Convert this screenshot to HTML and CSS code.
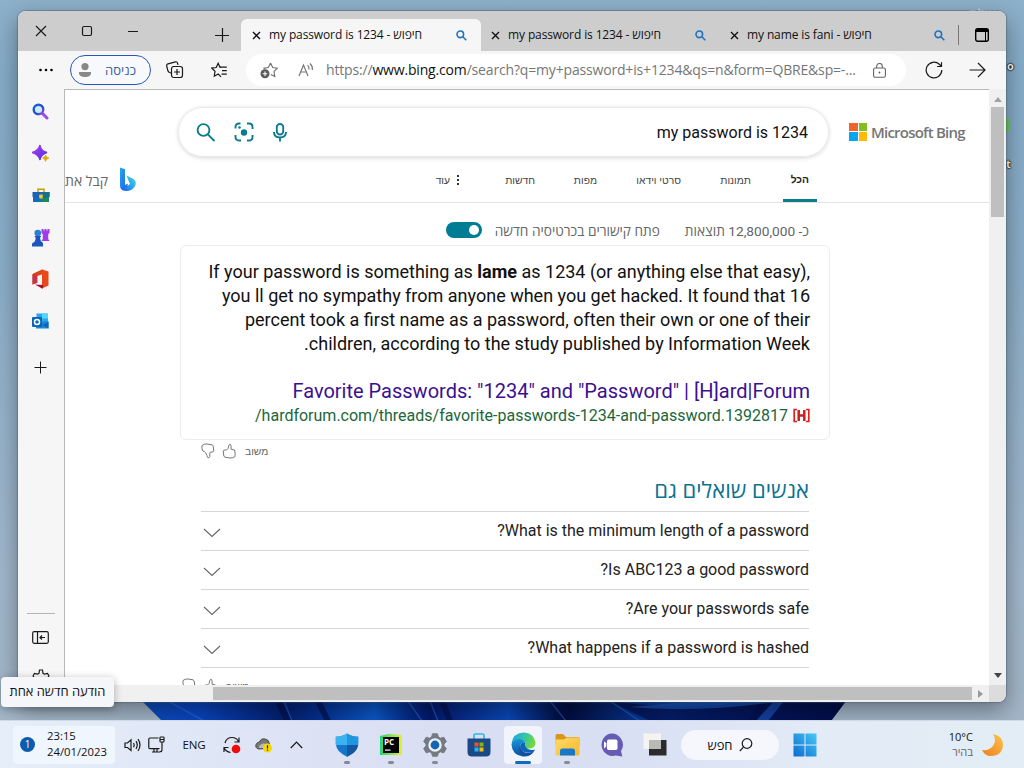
FILE: index.html
```html
<!DOCTYPE html>
<html lang="he">
<head>
<meta charset="utf-8">
<title>my password is 1234 - חיפוש</title>
<link rel="stylesheet" href="styles.css">
</head>
<body>
<svg class="defs" width="0" height="0">
  <defs>
    <linearGradient id="gMag" x1="0" y1="0" x2="1" y2="1"><stop offset="0" stop-color="#1b63d6"/><stop offset=".6" stop-color="#1c4fc4"/><stop offset="1" stop-color="#b14bf0"/></linearGradient>
    <linearGradient id="gStar" x1="0" y1="0" x2="1" y2="1"><stop offset="0" stop-color="#b23af2"/><stop offset="1" stop-color="#4a35e0"/></linearGradient>
    <linearGradient id="gBing" x1="0" y1="0" x2="1" y2="1"><stop offset="0" stop-color="#25a5f5"/><stop offset="1" stop-color="#1b5fe0"/></linearGradient>
    <linearGradient id="gBing2" x1="1" y1="0" x2="0" y2="1"><stop offset="0" stop-color="#40e0d8"/><stop offset=".5" stop-color="#2ba4ef"/><stop offset="1" stop-color="#1c53e8"/></linearGradient>
    <linearGradient id="gOff" x1="0" y1="0" x2="1" y2="1"><stop offset="0" stop-color="#d22a10"/><stop offset="1" stop-color="#f2662a"/></linearGradient>
    <linearGradient id="gEdge" x1="0" y1="0" x2="1" y2=".3"><stop offset="0" stop-color="#1aa5e6"/><stop offset=".6" stop-color="#35c5a5"/><stop offset="1" stop-color="#6fd843"/></linearGradient>
    <linearGradient id="gEdge2" x1="0" y1="0" x2="0" y2="1"><stop offset="0" stop-color="#1a93dc"/><stop offset="1" stop-color="#0c4fa0"/></linearGradient>
    <linearGradient id="gFold" x1="0" y1="0" x2="1" y2="1"><stop offset="0" stop-color="#ffdc6a"/><stop offset="1" stop-color="#f5b82a"/></linearGradient>
    <linearGradient id="gWin" x1="1" y1="0" x2="0" y2="1"><stop offset="0" stop-color="#48c8f6"/><stop offset="1" stop-color="#0a6ad0"/></linearGradient>
    <linearGradient id="gMoon" x1="1" y1="0" x2="0" y2="1"><stop offset="0" stop-color="#fcc54a"/><stop offset="1" stop-color="#ee7d1e"/></linearGradient>
    <linearGradient id="gWall" x1="0" y1="0" x2="1" y2="0"><stop offset="0" stop-color="#0c4ab8"/><stop offset=".08" stop-color="#0a45c0"/><stop offset=".2" stop-color="#041f70"/><stop offset=".25" stop-color="#04308f"/><stop offset=".33" stop-color="#0b58c8"/><stop offset=".38" stop-color="#052a86"/><stop offset=".41" stop-color="#03196a"/><stop offset=".52" stop-color="#0a48b8"/><stop offset=".6" stop-color="#020b3c"/><stop offset=".75" stop-color="#0a45b0"/><stop offset=".85" stop-color="#052a80"/><stop offset="1" stop-color="#030c38"/></linearGradient>
    <linearGradient id="gPc" x1="0" y1="0" x2="1" y2="0"><stop offset="0" stop-color="#22d47b"/><stop offset="1" stop-color="#e8ee30"/></linearGradient>
  </defs>
</svg>

<main class="desktop">
  <svg class="wallpaper" viewBox="0 0 704 20" preserveAspectRatio="none">
    <path d="M0 0H704L689 20H20Z" fill="url(#gWall)"/>
    <path d="M26 0L62 20M142 0L150 20M266 0L280 20M288 0L296 20M408 0L424 20M468 0L498 20" stroke="#2f7ae8" stroke-width="1.5" opacity=".45"/>
    <path d="M136 0L146 20M176 0L186 20M300 0L308 20M416 0L432 20M610 20L622 0" stroke="#02114e" stroke-width="6" opacity=".7"/>
    <path d="M468 0Q530 10 630 0L704 0L689 20H508Z" fill="#031050" opacity=".75"/>
    <path d="M488 6Q560 12 640 0H560Z" fill="#1c5cc6" opacity=".7"/>
    <path d="M614 20L632 0H642L626 20Z" fill="#153f9e"/>
  </svg>
  <span class="stray stray-top">אילת</span>
  <span class="stray stray-o">o</span>
  <span class="stray-dot"></span>
  <span class="stray stray-t">t</span>

  <section class="window">
    <header class="titlebar">
      <span class="cell"><svg width="12" height="12" viewBox="0 0 12 12"><path d="M1 1L11 11M11 1L1 11" class="ln"/></svg></span>
      <span class="cell"><svg width="12" height="12" viewBox="0 0 12 12"><rect x="1.5" y="1.5" width="9" height="9" rx="1.5" class="ln"/></svg></span>
      <span class="cell"><svg width="12" height="12" viewBox="0 0 12 12"><path d="M1 6.5H11" class="ln"/></svg></span>
      <span></span>
      <span class="cell low plustab"><svg width="14" height="14" viewBox="0 0 14 14"><path d="M0 7.5H14M7.5 0V14" class="ln"/></svg></span>
      <div class="tab active"><svg class="tx" viewBox="0 0 9 9"><path d="M1 1L8 8M8 1L1 8"/></svg><span class="tt">my password is 1234 - חיפוש</span><svg class="tm" viewBox="0 0 11 11"><circle cx="4.3" cy="4.3" r="3.3"/><path d="M6.8 6.8L10.3 10.3"/></svg></div>
      <div class="tab"><svg class="tx" viewBox="0 0 9 9"><path d="M1 1L8 8M8 1L1 8"/></svg><span class="tt">my password is 1234 - חיפוש</span><svg class="tm" viewBox="0 0 11 11"><circle cx="4.3" cy="4.3" r="3.3"/><path d="M6.8 6.8L10.3 10.3"/></svg></div>
      <div class="tab"><svg class="tx" viewBox="0 0 9 9"><path d="M1 1L8 8M8 1L1 8"/></svg><span class="tt">my name is fani - חיפוש</span><svg class="tm" viewBox="0 0 11 11"><circle cx="4.3" cy="4.3" r="3.3"/><path d="M6.8 6.8L10.3 10.3"/></svg></div>
      <span class="tabrule"></span>
      <span class="cell low"><svg width="14" height="14" viewBox="0 0 14 14"><rect x=".7" y=".7" width="12.6" height="12.6" rx="2" fill="none" stroke="#000" stroke-width="1.4"/><path d="M.5 2.5a2 2 0 0 1 2-2h9a2 2 0 0 1 2 2V4H.5zM10 4h1v10h-1z"/></svg></span>
    </header>

    <div class="toolbar">
      <span class="cell"><svg width="14" height="4" viewBox="0 0 14 4"><circle cx="1.5" cy="2" r="1.3"/><circle cx="7" cy="2" r="1.3"/><circle cx="12.5" cy="2" r="1.3"/></svg></span>
      <div class="signin"><svg width="12" height="14" viewBox="0 0 12 14"><circle cx="6" cy="3.6" r="3.6" fill="#8a8886"/><path d="M0 9h12v1.2C12 12.6 9.5 14 6 14S0 12.6 0 10.2z" fill="#8a8886"/></svg><span>כניסה</span></div>
      <span class="cell"><svg width="18" height="18" viewBox="0 0 18 18"><path d="M5 12L3.500 11.500Q2.300 11 1.900 9.800L.7 5Q.4 3.300 2 2.800L9.500.8Q11 .5 11.500 2L12 3.800" class="ln"/><rect x="5.500" y="5.500" width="11" height="11" rx="2.200" class="ln"/><path d="M11 8v6M8 11h6" class="ln"/></svg></span>
      <span class="cell"><svg width="17" height="17" viewBox="0 0 17 17"><path d="M9 5.200H15.800M11 8.700H15.800M10.500 12.200H15.800" class="ln"/><path d="M9.800 5.200L8.900 5.200L7.200 1.200L5.200 5.500L.8 6.100L4 9.300L3.300 14.200L7.200 12L10 14.800" class="ln"/></svg></span>
      <div class="url">
        <svg class="addfav" viewBox="0 0 18 17"><path d="M10.500 1L12.700 5.600L17.300 6.200L14 9.600L14.800 14.600L10.800 12.600M4.500 7.200L4 6.200L8.300 5.600L10.500 1" fill="none" stroke="#6d6d6d" stroke-width="1.100"/><circle cx="5" cy="11.800" r="4.500" fill="#5c5c5c"/><path d="M5 9.500v4.600M2.700 11.800h4.600" stroke="#fff" stroke-width="1.100"/></svg>
        <svg class="read" viewBox="0 0 16 14"><path d="M1 13L5.500 2L10 13M2.700 9H8.400M9.500 2.200Q11.300 4 11 6.500M12 .5Q15 3.500 14.300 7" fill="none" stroke="#777" stroke-width="1.200"/></svg>
        <span class="addr">https://<b>www.bing.com</b>/search?q=my+password+is+1234&amp;qs=n&amp;form=QBRE&amp;sp=-...</span>
        <svg class="lock" viewBox="0 0 13 15"><rect x=".6" y="5" width="11.800" height="9.300" rx="1.600" fill="none" stroke="#666" stroke-width="1.100"/><path d="M3.700 5V3.300a2.800 2.800 0 0 1 5.600 0V5" fill="none" stroke="#666" stroke-width="1.100"/><circle cx="6.500" cy="9.500" r=".9" fill="#555"/></svg>
      </div>
      <span class="cell"><svg width="18" height="18" viewBox="0 0 18 18"><path d="M16.800 9A7.800 7.800 0 1 1 14.300 3.300L16.500 5.500M16.500 1.200V5.500H12" class="ln"/></svg></span>
      <span class="cell"><svg width="17" height="16" viewBox="0 0 17 16"><path d="M.5 8H16M9 1L16 8L9 15" class="ln"/></svg></span>
    </div>

    <div class="main">
      <aside class="side">
        <span class="cell"><svg width="17" height="17" viewBox="0 0 17 17"><circle cx="6.500" cy="6.500" r="4.800" fill="#cdeafd" stroke="url(#gMag)" stroke-width="2.400"/><path d="M10.300 10.300L11.600 11.600" stroke="#1b4fc0" stroke-width="2.400"/><path d="M11.600 11.600L15 15" stroke="#a04bf0" stroke-width="3" stroke-linecap="round"/></svg></span>
        <span class="cell"><svg width="17" height="18" viewBox="0 0 17 18"><path d="M8 1Q9 7 15 8.500Q9 10 8 16Q6.500 10 0 8.500Q6.500 7 8 1Z" fill="url(#gStar)" stroke="url(#gStar)" stroke-width="1.300"/><path d="M13.500 11Q14 13.500 17 14Q14 14.700 13.500 17.500Q13 14.700 10.500 14Q13 13.500 13.500 11Z" fill="#e0aa08" stroke="#e0aa08" stroke-width=".7"/></svg></span>
        <span class="cell"><svg width="18" height="15" viewBox="0 0 18 15"><path d="M6 4V1.200H12V4" fill="none" stroke="#c99a10" stroke-width="1.500"/><path d="M1 7H17V14H1Z" fill="#188b58"/><path d="M1 7H9V14H1Z" fill="#146bb6"/><path d="M.5 4H17.500V9L9 10L.5 9Z" fill="#1c63b4"/><path d="M9 4h8.500v5L9 10z" fill="#176f8f"/><rect x="7.200" y="6.500" width="3.600" height="4" rx=".8" fill="#f4c52c"/></svg></span>
        <span class="cell"><svg width="19" height="19" viewBox="0 0 19 19"><path d="M10.500 1H12.500V2.500H13.500V1H15.500V2.500H16.500V1H18.500V5L17.200 6V11L18.500 13H10.500L11.800 11V6L10.500 5Z" fill="#a23be8"/><circle cx="6.800" cy="5" r="3.300" fill="#2980d8"/><path d="M3.500 8H10.200L9 10Q9 13 12 15V18.500H1V15.500Q4.500 14 4.700 10Z" fill="#1b55bd"/></svg></span>
        <span class="cell"><svg width="17" height="20" viewBox="0 0 17 20"><path d="M10 .5L16.500 2.500V16.500L10 19.500Z" fill="#e64a19"/><path d="M.5 5L10 .5L11.500 1V5L5.500 7V14L.5 15.500Z" fill="url(#gOff)"/><path d="M.5 5.500V15.500L5 13.500V7.500Z" fill="#c2354b"/><path d="M3 15.500L11 16V19.200L10 19.500Z" fill="#a3122c"/></svg></span>
        <span class="cell"><svg width="17" height="17" viewBox="0 0 17 17"><path d="M4.500 .5H16V10H4.500Z" fill="#28a8ea"/><path d="M10 .5h6v5h-6z" fill="#50d9ff"/><path d="M4 9L16.500 8V15.500H4Z" fill="#178bd8"/><path d="M10 12L16.500 9V15.500Z" fill="#1066b5"/><rect x="0" y="4" width="10" height="10" rx="1" fill="#0a64ba"/><circle cx="5" cy="9" r="2.500" fill="none" stroke="#fff" stroke-width="1.500"/></svg></span>
        <span class="cell plus"><svg width="13" height="13" viewBox="0 0 13 13"><path d="M.5 6.500H12.500M6.500 .5V12.500" class="ln thin"/></svg></span>
        <span class="push"></span>
        <span class="rule"></span>
        <span class="cell pane"><svg width="17" height="13" viewBox="0 0 17 13"><rect x=".7" y=".7" width="15.600" height="11.600" rx="1.500" class="ln"/><path d="M5.500 1V12M8 6.500H13M10 4.500L8 6.500L10 8.500" class="ln"/></svg></span>
        <span class="gearcell"><svg width="18" height="18" viewBox="0 0 18 18"><path d="M1 7L2.500 4.500L5.500 5.200L7 4.300L7.500 1H10.500L11 4.300L12.500 5.200L15.500 4.500L17 7L15 9.500L17 12L15 15L12 14H6L3 15L1 12L3 9.500Z" class="ln"/></svg></span>
      </aside>

      <div class="viewport">
        <div class="searchrow">
          <div class="searchbox">
            <svg width="20" height="19" viewBox="0 0 20 19"><circle cx="7.500" cy="7" r="5.900" class="teal"/><path d="M11.800 11.300L18.500 18" class="teal"/></svg>
            <svg width="20" height="20" viewBox="0 0 20 20"><path d="M1.500 6.500V5Q1.500 1.500 5 1.500H6.500M13 1.500H15Q18.500 1.500 18.500 5V7M18.500 13V15Q18.500 18.500 15 18.500H13M7 18.500H5Q1.500 18.500 1.500 15V13" class="teal"/><circle cx="10" cy="10.500" r="3.200" fill="#0b7c8e"/><circle cx="5.500" cy="5.500" r="1.300" fill="#0b7c8e"/></svg>
            <svg width="14" height="19" viewBox="0 0 14 19"><rect x="3.800" y="1" width="6.400" height="10.500" rx="3.200" class="teal"/><path d="M1 9Q1 14.500 7 14.500Q13 14.500 13 9M7 14.500V18.500" class="teal"/></svg>
            <span class="query">my password is 1234</span>
          </div>
          <div class="logo"><i class="r"></i><i class="g"></i><i class="b"></i><i class="y"></i></div>
          <span class="brand">Microsoft Bing</span>
        </div>

        <nav class="nav">
          <span class="get">קבל את</span>
          <svg class="bing" viewBox="0 0 18 25"><path d="M1 .5L6 2.300V18L9 16.500L7 23.500Q1 24 1 18.500Z" fill="url(#gBing)"/><path d="M7.500 8.500L14.500 12Q17.500 14 16.500 18Q14.500 23.500 8 24Q3 24 2 21Q6 21 11 17L9.500 13.500Z" fill="url(#gBing2)"/></svg>
          <span></span>
          <span class="n more">עוד</span><span class="dots"><i></i><i></i><i></i></span>
          <span class="n">חדשות</span><span class="n">מפות</span><span class="n">סרטי וידאו</span><span class="n">תמונות</span><span class="n on">הכל</span>
        </nav>

        <div class="meta">
          <span class="toggle"><i></i></span>
          <span class="m1" dir="rtl">פתח קישורים בכרטיסיה חדשה</span>
          <span class="m2" dir="rtl">כ- 12,800,000 תוצאות</span>
        </div>

        <article class="card">
          <p class="snip">
            <span>If your password is something as <b>lame</b> as 1234 (or anything else that easy),</span>
            <span>you ll get no sympathy from anyone when you get hacked. It found that 16</span>
            <span>percent took a first name as a password, often their own or one of their</span>
            <span dir="rtl">children, according to the study published by Information Week.</span>
          </p>
          <h2 class="res">Favorite Passwords: "1234" and "Password" | [H]ard|Forum</h2>
          <div class="cite"><span dir="rtl">hardforum.com/threads/favorite-passwords-1234-and-password.1392817/</span>
            <svg width="17" height="15" viewBox="0 0 17 15"><path d="M4 1.500H1.200V13.500H4M13 1.500H15.800V13.500H13" fill="none" stroke="#d22" stroke-width="1.700"/><path d="M5.700 2V13M11.300 2V13M5.500 7.500H11.500" stroke="#c82020" stroke-width="2.500"/></svg>
          </div>
        </article>

        <div class="fb">
          <svg class="thumb" viewBox="0 0 14 16"><path d="M1 2.500Q3 .7 6 1L11 1.800Q12.500 2.500 12.300 4L12.800 8Q12.500 9 11 9H9.500L8.800 10V13.500Q8.500 15 7 14.800Q6.200 14.500 6 12.500L4.500 9.500Q3.500 8.300 1.800 8Q.5 5 1 2.500Z"/></svg>
          <svg class="thumb" viewBox="0 0 14 16"><path d="M13 13.500Q11 15.300 8 15L3 14.200Q1.500 13.500 1.700 12L1.200 8Q1.500 7 3 7H4.500L6 5.500L7 2Q7.500 .8 8.500 1.500Q9.500 2.500 9 6.200L12.500 7Q13.500 10 13 13.500Z"/></svg>
          <span>משוב</span>
        </div>

        <section class="paa">
          <h3 dir="rtl">אנשים שואלים גם</h3>
          <div class="q"><svg viewBox="0 0 18 10"><path d="M1 1L9 8.500L17 1"/></svg><span dir="rtl">What is the minimum length of a password?</span></div>
          <div class="q"><svg viewBox="0 0 18 10"><path d="M1 1L9 8.500L17 1"/></svg><span dir="rtl">Is ABC123 a good password?</span></div>
          <div class="q"><svg viewBox="0 0 18 10"><path d="M1 1L9 8.500L17 1"/></svg><span dir="rtl">Are your passwords safe?</span></div>
          <div class="q last"><svg viewBox="0 0 18 10"><path d="M1 1L9 8.500L17 1"/></svg><span dir="rtl">What happens if a password is hashed?</span></div>
        </section>
        <div class="fb fb2">
          <svg class="thumb" viewBox="0 0 14 16"><path d="M1 2.500Q3 .7 6 1L11 1.800Q12.500 2.500 12.300 4L12.800 8Q12.500 9 11 9H9.500L8.800 10V13.500Q8.500 15 7 14.800Q6.200 14.500 6 12.500L4.500 9.500Q3.500 8.300 1.800 8Q.5 5 1 2.500Z"/></svg>
          <svg class="thumb" viewBox="0 0 14 16"><path d="M13 13.500Q11 15.300 8 15L3 14.200Q1.500 13.500 1.700 12L1.200 8Q1.500 7 3 7H4.500L6 5.500L7 2Q7.500 .8 8.500 1.500Q9.500 2.500 9 6.200L12.500 7Q13.500 10 13 13.500Z"/></svg>
          <span>משוב</span>
        </div>
      </div>

      <div class="vbar"><i class="up"></i><i class="vthumb"></i><i class="down"></i></div>
      <div class="hbar"><i class="hthumb"></i><i class="right"></i></div>
      <div class="corner"></div>
    </div>
  </section>

  <footer class="taskbar">
    <div class="clock"><span class="badge">1</span><span class="time"><span>23:15</span><span>24/01/2023</span></span></div>
    <span class="cell"><svg width="17" height="14" viewBox="0 0 17 14"><path d="M1 5V9.500H3.500L7 12.500V1.800L3.500 5ZM9.500 5Q10.800 7 9.500 9.300M12 3.200Q14.500 7 12 11M14 1.200Q18 7 14 13" class="ln"/></svg></span>
    <span class="cell"><svg width="17" height="17" viewBox="0 0 17 17"><path d="M10.500 2H2Q.8 2 .8 3.200V11.500Q.8 12.700 2 12.700H11.500M6 13V16M9 13V16M4 16H12" class="ln"/><rect x="12" y="1" width="4" height="5" rx=".8" class="ln"/><path d="M14 6V13.500Q14 16 12 15.500M12 3.500H16" class="ln"/></svg></span>
    <span class="cell eng">ENG</span>
    <span class="cell"><svg width="18" height="18" viewBox="0 0 18 18"><path d="M2 7Q3.500 1.500 9 1.500Q13.500 1.500 15.500 5.500M16 1.500V6H11.500M1 11.500Q2.500 15.500 7.500 16.500M1 16V11.500H5.500" class="ln"/><circle cx="13" cy="13" r="4.300" fill="#f00a0a"/></svg></span>
    <span class="cell"><svg width="18" height="16" viewBox="0 0 18 16"><path d="M3.500 12Q0 11 1 7.500Q2 5 4.500 5Q6 1 10 2Q14 2.500 14.500 7L15 11.500Z" fill="#777" stroke="#333" stroke-width=".8"/><path d="M4 10Q6 5 12 7L13 11H4Z" fill="#b9b9b9"/><circle cx="12.500" cy="11" r="4.500" fill="#f6d800"/><path d="M12.500 8.200V11.500M12.500 12.600V13.700" stroke="#222" stroke-width="1.200"/></svg></span>
    <span class="cell"><svg width="13" height="8" viewBox="0 0 13 8"><path d="M.8 7L6.500 1.200L12.200 7" class="ln"/></svg></span>
    <span></span>
    <span class="app run"><svg width="24" height="24" viewBox="0 0 24 24"><path d="M12 .5Q16 3.500 23.200 3.800V11Q22.500 19 12 23.700Q1.500 19 .8 11V3.800Q8 3.500 12 .5Z" fill="#1576c8"/><path d="M12 .5V12H.8V3.800Q8 3.500 12 .5Z" fill="#3cb3ee"/><path d="M12 .5V12H23.200V3.800Q16 3.500 12 .5Z" fill="#2196e0"/><path d="M12 12H23.200Q22 19.500 12 23.700Z" fill="#1557a0"/></svg></span>
    <span class="app run"><svg width="22" height="22" viewBox="0 0 22 22"><path d="M0 2L8 0L22 1V21H0Z" fill="url(#gPc)"/><rect x="3" y="3" width="16" height="16"/><text x="4" y="11" font-family="Open Sans" font-weight="700" font-size="8" fill="#fff">PC</text><path d="M5 15.500h5.500v1.200H5z" fill="#fff"/></svg></span>
    <span class="app run"><svg width="24" height="24" viewBox="0 0 24 24"><path d="M9.500 .8H14.500L15.300 4L17.500 5.200L20.800 4.200L23.300 8.500L21 11V13L23.300 15.500L20.800 19.800L17.500 18.800L15.300 20L14.500 23.200H9.500L8.700 20L6.500 18.800L3.200 19.800L.7 15.500L3 13V11L.7 8.500L3.200 4.200L6.500 5.200L8.700 4Z" fill="#757b82" stroke="#757b82" stroke-linejoin="round"/><circle cx="12" cy="12" r="6.700" fill="#eef2f6"/><circle cx="12" cy="12" r="4.400" fill="#1665b5"/></svg></span>
    <span class="app"><svg width="24" height="24" viewBox="0 0 24 24"><path d="M7 6V2.200Q7 1 8.200 1H15.800Q17 1 17 2.200V6" fill="none" stroke="#2dbbe8" stroke-width="1.700"/><path d="M.5 5.500H23.500V19Q23.500 23.500 19 23.500H5Q.5 23.500 .5 19Z" fill="#1a4a86"/><path d="M7.500 9.500h4v4h-4z" fill="#f25022"/><path d="M12.500 9.500h4v4h-4z" fill="#7fba00"/><path d="M7.500 14.500h4v4h-4z" fill="#29b0f4"/><path d="M12.500 14.500h4v4h-4z" fill="#ffb900"/></svg></span>
    <span class="app sel"><svg width="25" height="25" viewBox="0 0 25 25"><path d="M.5 12Q1.500 1 12.500 .5Q23 .8 24.500 10.500Q24.500 16 18.500 16.500Q14 16.500 14.500 14.200Q16 12 14 10Q8 5 .5 12Z" fill="url(#gEdge)"/><path d="M.5 12.500Q2 7.500 8 7Q13 7.500 14.500 11Q9.500 9.500 9 14.500Q10 21 17 21.500Q21 21 23 19.500Q19 25 12 24.500Q1 23 .5 12.500Z" fill="url(#gEdge2)"/><path d="M9 14Q10 21 17 21Q21 20.500 23 19Q20 24 14 24Q6 21 9 14Z" fill="#134f9e"/><path d="M14.500 11Q9.500 9.500 9 14.500Q9.500 18.500 13.500 20.300Q18 21.500 23 19.500L24 17.500Q19 19 15.500 16Q13.800 14.500 14.500 11Z" fill="#1263b4"/></svg></span>
    <span class="app run"><svg width="25" height="24" viewBox="0 0 25 24"><path d="M.5 2.500Q.5 1 2 1H8L11 4H23Q24.500 4 24.500 5.500V12H.5Z" fill="#dc9518"/><path d="M.5 6.500H9L12 4.500H23Q24.500 4.500 24.500 6V21Q24.500 22.500 23 22.500H2Q.5 22.500 .5 21Z" fill="url(#gFold)"/><path d="M5 22.500V18Q5 15.500 7.500 15.500H17.500Q20 15.500 20 18V22.500Z" fill="#1877c9"/></svg></span>
    <span class="app"><svg width="24" height="24" viewBox="0 0 24 24"><path d="M12 .5A11.300 11.300 0 1 0 17 22.500L23.300 23.500L22 18A11.300 11.300 0 0 0 12 .5Z" fill="#665bb5"/><rect x="8" y="6.500" width="10.500" height="10.500" rx="1.800" fill="#fff"/><path d="M5 8.500L7.300 10V13.500L5 15.500Z" fill="#fff"/></svg></span>
    <span class="app"><svg width="24" height="23" viewBox="0 0 24 23"><path d="M6 7H23.500V22.500H6Z" fill="#2b2b2d"/><path d="M.5 .5H18V16H.5Z" fill="#f6f5f3" opacity=".92"/><path d="M6 7H18V16H6Z" fill="#b9b9b5"/></svg></span>
    <div class="find"><span>חפש</span><svg width="14" height="14" viewBox="0 0 14 14"><circle cx="8" cy="5.500" r="4.800" class="ln"/><path d="M4.500 9.200L.8 13" class="ln"/></svg></div>
    <span class="app"><svg width="24" height="24" viewBox="0 0 24 24"><path d="M.5 .5h11v11H.5zM12.500 .5h11v11h-11zM.5 12.500h11v11H.5zM12.500 12.500h11v11h-11z" fill="url(#gWin)"/></svg></span>
    <span></span>
    <div class="weather"><span>10°C</span><span class="clear">בהיר</span></div>
    <span class="cell"><svg width="23" height="24" viewBox="0 0 23 24"><path d="M12 1Q22 3 22 12Q21 23 10 23Q4 23 1 17Q8 18 12 13Q16 7 12 1Z" fill="url(#gMoon)"/></svg></span>
  </footer>

  <div class="tip">הודעה חדשה אחת</div>
</main>
</body>
</html>
```

FILE: styles.css
```css
* { box-sizing: border-box; }
body { margin: 0; font-family: "Open Sans", "Noto Sans", sans-serif; color: #111; }
.defs { position: absolute; }
.desktop {
  position: relative; width: 1024px; height: 768px; overflow: hidden;
  display: flex; flex-direction: column; justify-content: flex-end;
  background: linear-gradient(180deg, #8db0ca 0, #84abc7 10%, #8aacc6 35%, #a0b6cb 75%, #a3b4c5 100%);
}
.wallpaper { position: absolute; left: 142px; top: 701px; width: 704px; height: 20px; }
.stray { position: absolute; font: 700 11px "Open Sans", sans-serif; color: #fff; text-shadow: 0 0 2px #000, 0 0 2px #000, 0 0 1px #000; }
.stray-top { left: 969px; top: 4px; font-weight: 400; font-size: 14px; color: #d5e2ec; text-shadow: none; }
.stray-o { left: 1007px; top: 58px; }
.stray-t { left: 1006px; top: 156px; }
.stray-dot { position: absolute; left: 1000px; top: 117px; width: 10px; height: 16px; border-radius: 50%; background: #63cf4a; }

.cell { display: flex; align-items: center; justify-content: center; }
.ln { fill: none; stroke: #1a1a1a; stroke-width: 1.2; }
.ln.thin { stroke-width: 1; }
.teal { fill: none; stroke: #0b7c8e; stroke-width: 1.9; }

.window {
  position: absolute; left: 18px; top: 11px; width: 988px; height: 691px;
  display: flex; flex-direction: column; overflow: hidden;
  border-radius: 8px; background: #f6f6f6;
  box-shadow: 0 0 1px 1px rgba(70, 90, 110, .45), 0 8px 22px rgba(0, 0, 0, .38);
}
.titlebar {
  display: grid; grid-template-columns: 46px 46px 46px 48px 37px 239px 239px 239px 1px 1fr;
  height: 40px; background: #cdcdcd; flex: none;
}
.low { padding-top: 7px; }
.low:last-child { padding-right: 2px; }
.plustab { padding-right: 2px; }
.tab { display: flex; align-items: center; margin-top: 8px; padding: 0 13px 0 11px; font-size: 12px; white-space: nowrap; }
.tab.active { background: #f6f6f6; border-radius: 6px 6px 0 0; margin-right: -1px; padding-right: 14px; }
.tx { width: 9px; height: 9px; fill: none; stroke: #111; stroke-width: 1.4; margin-right: 8px; }
.tt { flex: 1; letter-spacing: -.12px; padding-bottom: 1px; }
.tm { width: 11px; height: 11px; fill: none; stroke: #1f72c0; stroke-width: 1.6; }
.tabrule { margin: 14px 0 6px; background: #777; }

.toolbar {
  display: grid; grid-template-columns: 52px 81px 48px 40px 7px 660px 56px 32px;
  height: 38px; flex: none; align-items: center;
}
.toolbar > .cell:first-child { padding-left: 3px; }
.toolbar > .url { grid-column: 6; }
.toolbar > .cell:last-child { grid-column: 8; padding-right: 2px; }
.signin { height: 30px; border: 1px solid #2b54b8; border-radius: 15px; display: flex; align-items: center; justify-content: space-between; padding: 0 14px 1px 8px; font-size: 13px; color: #3f5c9c; background: #f7f9fc; }
.url { height: 32px; border-radius: 16px; background: #fff; display: flex; align-items: center; padding: 0 20px 0 14px; color: #767676; font-size: 14px; white-space: nowrap; }
.addfav { width: 18px; height: 17px; margin-right: 20px; }
.read { width: 16px; height: 14px; margin-right: 12px; }
.addr { flex: 1; letter-spacing: -.17px; padding-bottom: 1px; }
.addr b { font-weight: 400; color: #111; }
.lock { width: 13px; height: 15px; }

.main { flex: 1; display: grid; grid-template: 1fr 17px / 46px 1fr 17px; min-height: 0; }
.side { grid-row: 1 / 3; display: flex; flex-direction: column; align-items: center; padding: 1px 1px 0 0; overflow: hidden; }
.side .cell { height: 42px; width: 45px; flex: none; }
.side .plus { margin-top: 4px; }
.push { flex: 1; }
.rule { width: 28px; height: 1px; background: #b5b5b5; flex: none; }
.side .pane { height: 26px; margin-top: 10px; }
.gearcell { height: 52px; padding-top: 19px; flex: none; }

.viewport {
  background: #fff; border: solid #b8b8b8; border-width: 1px 0 0 1px; overflow: hidden;
  display: flex; flex-direction: column; font-family: Roboto, "Liberation Sans", sans-serif; min-height: 0;
}
.viewport > * { flex: none; }
.searchrow { display: flex; align-items: center; height: 50px; margin: 17px 0 0 113px; }
.searchbox {
  width: 651px; height: 50px; border-radius: 25px; border: 1px solid #e8e8e8;
  box-shadow: 0 1px 4px rgba(0, 0, 0, .16); display: flex; align-items: center; padding: 0 20px 0 17px; gap: 18px;
}
.searchbox svg:nth-child(3) { margin-left: 1px; }
.query { margin-left: auto; font-size: 16px; }
.logo { display: grid; grid-template: 8.5px 8.5px / 8.5px 8.5px; gap: 1px; margin: 0 4px 0 20px; padding-bottom: 1px; }
.logo .r { background: #f0642a; }
.logo .g { background: #84bd1e; }
.logo .b { background: #05a6f0; }
.logo .y { background: #ffba08; }
.brand { font: 600 15px "Open Sans", sans-serif; color: #757575; letter-spacing: -.78px; white-space: nowrap; padding-bottom: 1px; }

.nav {
  display: grid; grid-template-columns: 43px 40px 1fr 16px 23px 62px 62px 84px 70px 66px;
  width: 924px; height: 46px; padding-right: 172px; align-items: center;
  font: 10.3px "Liberation Sans", sans-serif; color: #444; border-bottom: 1px solid #e4e4e4;
}
.get { font: 14px "Open Sans", sans-serif; color: #666; white-space: nowrap; padding-top: 2px; }
.bing { width: 18px; height: 25px; margin-left: 11px; }
.n { text-align: right; white-space: nowrap; padding-top: 1px; }
.n.on { font-weight: 700; color: #222; height: 45px; line-height: 44px; width: 34px; justify-self: end; border-bottom: 3px solid #0b7c8e; padding-right: 8px; }
.dots { display: flex; flex-direction: column; gap: 2px; align-items: flex-start; padding-left: 7px; }
.dots i { width: 2px; height: 2px; background: #333; }
.nav .more + .dots + .n { padding-left: 0; }

.meta { display: flex; justify-content: flex-end; align-items: center; height: 42px; padding: 12px 180px 0 0; color: #666; font-size: 13.7px; }
.toggle { width: 36px; height: 16px; border-radius: 8px; background: #007d94; padding: 3px; display: flex; justify-content: flex-end; margin-right: 13px; }
.toggle i { width: 10px; height: 10px; border-radius: 50%; background: #fff; }
.m1 { margin-right: 25px; font-family: "Open Sans", sans-serif; font-size: 13.65px; }
.m2 { font-family: Roboto, "Open Sans", sans-serif; }

.card { width: 650px; height: 195px; margin-left: 115px; border: 1px solid #ececec; border-radius: 6px; padding: 14px 19px 0 0; }
.snip { margin: 0; font-size: 18px; line-height: 24px; text-align: right; }
.snip span { display: block; white-space: nowrap; text-align: right; }
.res { margin: 21px 0 0; font-size: 20px; line-height: 28px; font-weight: 400; color: #3c1091; text-align: right; white-space: nowrap; }
.cite { display: flex; justify-content: flex-end; align-items: center; gap: 5px; height: 20px; font-size: 16px; color: #21663a; white-space: nowrap; }
.fb { display: flex; align-items: center; height: 22px; margin-left: 136px; gap: 7px; font: 10.3px "Liberation Sans", sans-serif; color: #666; }
.thumb { width: 14px; height: 16px; fill: none; stroke: #777; stroke-width: 1; }
.fb span { margin-left: 2px; }
.fb2 { margin-left: 117px; margin-top: 7px; }
.paa { margin: 15px 0 0 136px; width: 608px; }
.paa h3 { margin: 0; height: 34px; font: 400 22px/25px "Open Sans", sans-serif; color: #0b7290; }
.q { height: 39px; border-top: 1px solid #d6d6d6; display: flex; align-items: center; justify-content: space-between; font-size: 16px; color: #222; }
.q span { padding-bottom: 2px; }
.q.last { height: 40px; border-bottom: 1px solid #d6d6d6; }
.q svg { width: 18px; height: 10px; margin: 4px 0 0 2px; fill: none; stroke: #666; stroke-width: 1.1; }

.vbar { background: #f0f0f0; display: flex; flex-direction: column; align-items: center; padding: 8px 0 7px; }
.up { border: 4px solid transparent; border-top: 0; border-bottom: 5px solid #a3a3a3; }
.vthumb { width: 13px; height: 110px; margin-top: 5px; background: #bfbfbf; }
.down { border: 4px solid transparent; border-bottom: 0; border-top: 5px solid #444; margin-top: auto; }
.hbar { background: #f0f0f0; display: flex; align-items: center; padding: 0 6px 0 148px; justify-content: space-between; border-left: 1px solid #bbb; }
.hthumb { width: 759px; height: 13px; background: #bfbfbf; }
.right { border: 4px solid transparent; border-right: 0; border-left: 5px solid #999; }
.corner { background: #dcdcdc; }

.taskbar {
  height: 48px; display: grid; align-items: center;
  grid-template-columns: 102px 34px 14px 62px 14px 50px 14px 22px 44px 44px 44px 44px 44px 44px 44px 44px 106px 44px 1fr 26px 39px;
  padding: 0 12px 0 13px; position: relative;
  background: linear-gradient(90deg, #e6eef9 0, #dfe6f6 20%, #d9def2 45%, #d9e0f3 62%, #e2ebf6 80%, #e3edf5 100%);
  border-top: 1px solid #cfd9e8;
}
.taskbar svg { flex: none; }
.clock { height: 38px; border-radius: 4px; background: #f0f6fd; display: flex; align-items: center; padding-left: 7px; gap: 12px; font-size: 11.3px; }
.badge { width: 15px; height: 15px; border-radius: 50%; background: #0b5cad; color: #fff; font-size: 10px; line-height: 15px; text-align: center; }
.time { display: flex; flex-direction: column; line-height: 16px; padding-bottom: 2px; }
.eng { font-size: 11.5px; letter-spacing: -.2px; }
.app { height: 38px; width: 38px; margin: 0 3px; display: flex; align-items: center; justify-content: center; position: relative; border-radius: 4px; }
.app.sel { background: #f1f4fb; }
.app.run::after, .app.sel::after { content: ""; position: absolute; left: 16px; bottom: 0; width: 6px; height: 3px; border-radius: 2px; background: #858a94; }
.app.sel::after { left: 11px; width: 16px; background: #0f6cbd; }
.find { height: 30px; width: 98px; margin-left: 4px; border-radius: 15px; background: #f5f7fc; display: flex; align-items: center; justify-content: center; gap: 6px; font-size: 13px; }
.weather { display: flex; flex-direction: column; align-items: flex-end; font-size: 11px; line-height: 15px; white-space: nowrap; padding-bottom: 2px; }
.clear { color: #666; }
.tip {
  position: absolute; left: 1px; top: 677px; width: 113px; height: 30px; border-radius: 4px; background: #f4f6f9;
  box-shadow: 0 2px 8px rgba(0, 0, 0, .3); font-size: 12.9px; line-height: 28px; text-align: center; white-space: nowrap;
}
```
